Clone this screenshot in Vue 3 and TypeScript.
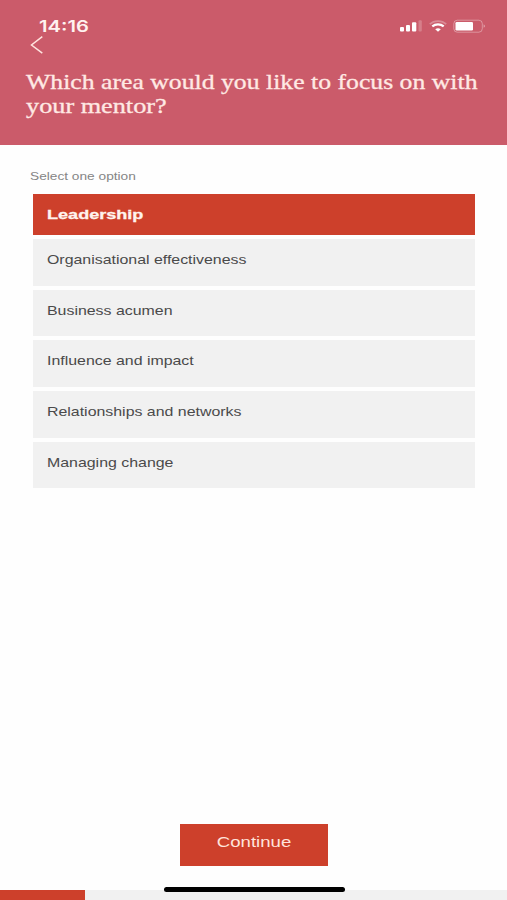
<script setup lang="ts">
import { ref } from 'vue'

const titleLines: string[] = ['Which area would you like to focus on with', 'your mentor?']
const options: string[] = [
  'Leadership',
  'Organisational effectiveness',
  'Business acumen',
  'Influence and impact',
  'Relationships and networks',
  'Managing change',
]
const selected = ref<string>('Leadership')
const progress = 16.8
</script>

<template>
  <main class="screen">
    <header class="header">
      <div class="status">
        <span class="time">14:16</span>
        <svg class="indicators" width="88" height="16" viewBox="0 0 88 16">
          <g fill="#fff">
            <rect x="1" y="9" width="4" height="4.500" rx="1" />
            <rect x="7" y="7" width="4" height="6.500" rx="1" />
            <rect x="13" y="4.300" width="4.300" height="9.200" rx="1" />
            <rect x="19.500" y="2.300" width="3.300" height="11.200" rx="1" opacity=".22" />
          </g>
          <g fill="none" stroke="#fff">
            <path d="M30.800 6.200C35 2 43 2 47.200 6.200" stroke-width="1.700" opacity=".3" />
            <path d="M33.300 8.300C36.500 5.700 41.500 5.700 44.700 8.300" stroke-width="2.300" />
          </g>
          <path d="M36.200 11.200Q39 9.200 41.800 11.200L39 13.700Z" fill="#fff" />
          <rect x="54.800" y="2.200" width="28.500" height="12" rx="3.500" fill="none" stroke="#fff" opacity=".35" />
          <rect x="56.500" y="4" width="17.500" height="8.500" rx="1.300" fill="#fff" />
          <path d="M84.700 6.200Q87 8 84.700 9.800Z" fill="#fff" opacity=".5" />
        </svg>
      </div>
      <button class="back" aria-label="Back">
        <svg width="14" height="20" viewBox="0 0 14 20">
          <path d="M12.300 1.700L1.500 10L12.300 18.200" fill="none" stroke="#ffe4df" stroke-width="1.500" />
        </svg>
      </button>
      <h1 class="title">
        <span v-for="line in titleLines" :key="line" class="line">{{ line }}</span>
      </h1>
    </header>

    <section class="content">
      <p class="hint"><span class="wide">Select one option</span></p>
      <ul class="options">
        <li
          v-for="option in options"
          :key="option"
          class="option"
          :class="{ selected: option === selected }"
          @click="selected = option"
        >
          <span class="wide">{{ option }}</span>
        </li>
      </ul>
    </section>

    <footer class="footer">
      <button class="continue"><span class="label">Continue</span></button>
      <div class="progress"><div class="bar" :style="{ width: progress + '%' }"></div></div>
      <div class="home"></div>
    </footer>
  </main>
</template>

<style>
body {
  background: #fefefe;
}
</style>

<style scoped>
.screen {
  position: relative;
  display: flex;
  flex-direction: column;
  height: 900px;
  overflow: hidden;
  background: #fefefe;
  font-family: "Liberation Sans", Arial, sans-serif;
}
.header {
  box-sizing: border-box;
  height: 145px;
  padding-top: 17px;
  background: #cb5b6a;
}
.status {
  display: flex;
  justify-content: space-between;
  height: 18px;
  padding: 0 20px 0 39px;
}
.time {
  color: #fff3f0;
  font: 600 16px/18px Inter, sans-serif;
  transform: scaleX(1.260);
  transform-origin: left;
}
.indicators {
  display: block;
  margin-top: 1px;
}
button {
  display: block;
  border: 0;
  padding: 0;
  background: none;
  font-family: inherit;
}
.back {
  height: 20px;
  margin-left: 30px;
}
.back svg {
  display: block;
}
.title {
  margin: 15px 0 0 25.500px;
  color: #ffe9e4;
  font: 400 21px/24px "Liberation Serif", serif;
}
.line {
  display: block;
  width: max-content;
  white-space: nowrap;
  transform: scaleX(1.225);
  transform-origin: left;
  -webkit-text-stroke: 0.300px currentColor;
}
.line:last-child {
  transform: scaleX(1.250);
}
.content {
  padding: 24px 32px 0 33px;
}
.hint {
  margin: 0 0 0 -3px;
  color: #858585;
  font-size: 11px;
  line-height: 14px;
}
.wide {
  display: inline-block;
  white-space: nowrap;
  transform: scaleX(1.223);
  transform-origin: left;
}
.hint .wide {
  transform: scaleX(1.245);
}
.options {
  display: flex;
  flex-direction: column;
  gap: 4px;
  margin: 10.500px 0 0;
  padding: 0;
  list-style: none;
}
.option {
  box-sizing: border-box;
  height: 46.700px;
  padding: 13px 0 0 14px;
  background: #f1f1f1;
  color: #4a4a4a;
  font-size: 13px;
  line-height: 16px;
}
.option.selected {
  height: 41.500px;
  background: #cd402b;
  color: #fff3ee;
  font-weight: 700;
}
.selected .wide {
  transform: scaleX(1.390);
  -webkit-text-stroke: 0.300px currentColor;
}
.footer {
  margin-top: auto;
}
.continue {
  width: 148px;
  height: 42px;
  margin: 0 auto 24.500px 180px;
  padding-bottom: 6px;
  background: #cd402b;
  color: #ffe4dc;
  font-size: 15px;
  line-height: 18px;
}
.label {
  display: inline-block;
  transform: scaleX(1.240);
}
.progress {
  height: 10px;
  background: #f1f1f1;
}
.bar {
  height: 100%;
  background: #cd402b;
}
.home {
  position: absolute;
  bottom: 8px;
  left: 163.500px;
  width: 181px;
  height: 5px;
  border-radius: 3px;
  background: #000;
}
</style>
